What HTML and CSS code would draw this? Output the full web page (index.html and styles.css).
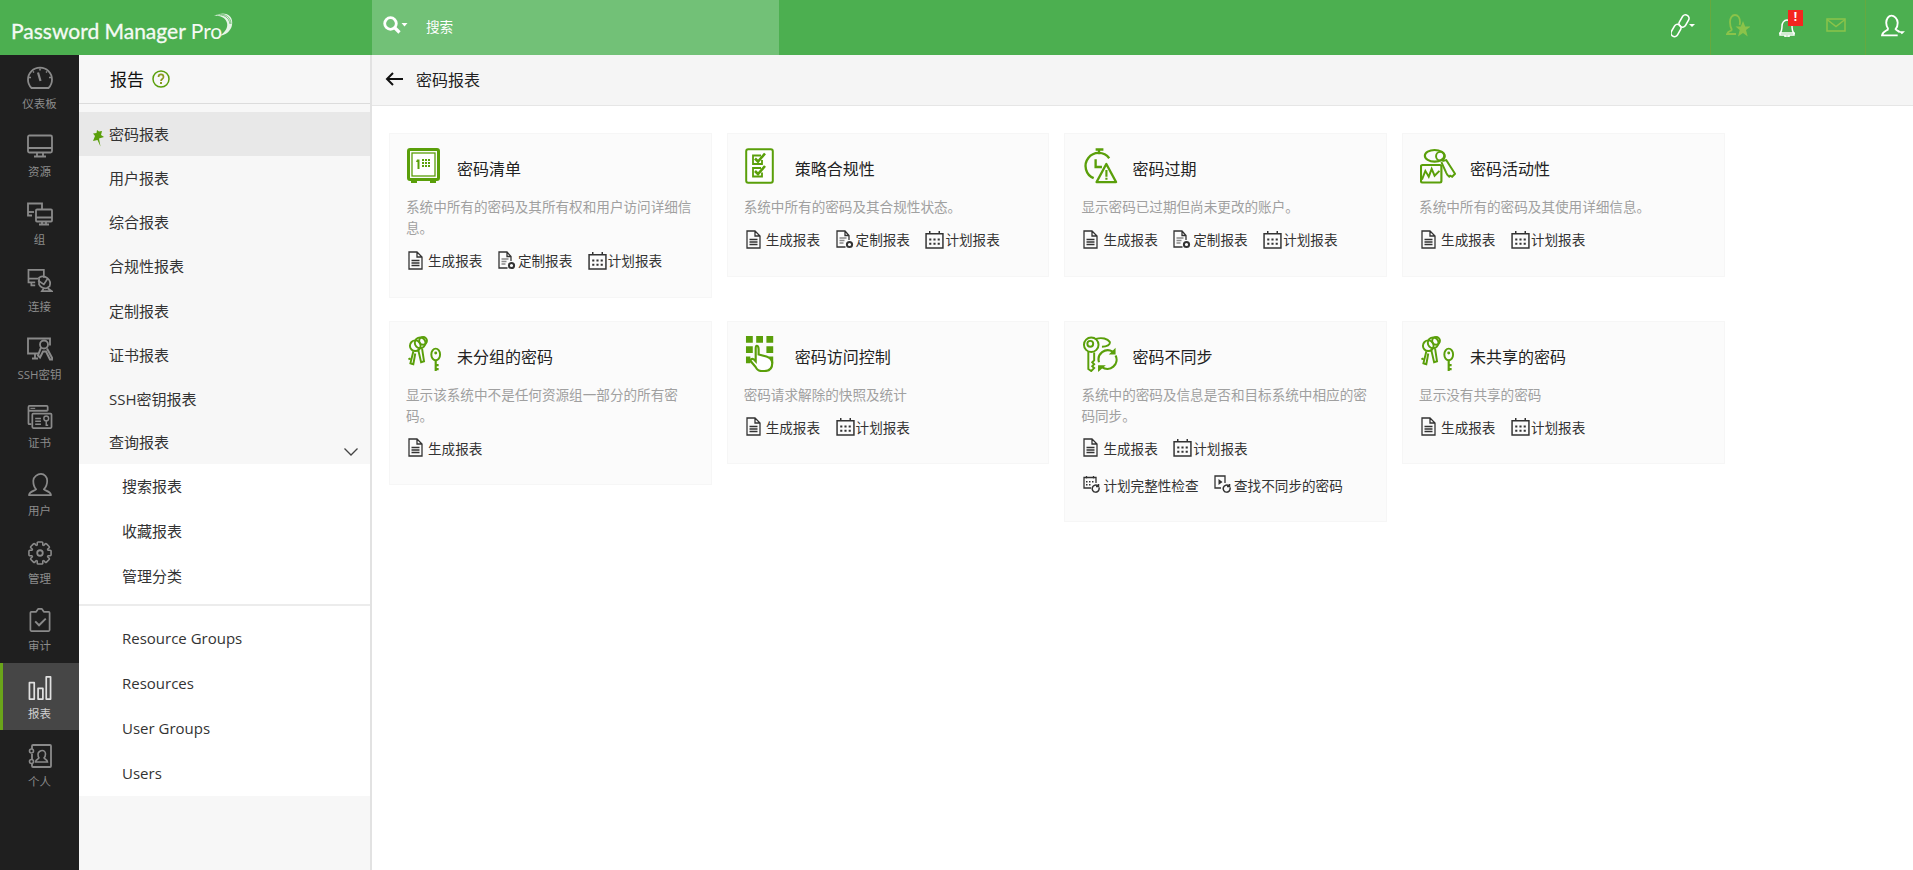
FILE: index.html
```html
<!DOCTYPE html>
<html lang="zh">
<head>
<meta charset="utf-8">
<title>密码报表</title>
<link rel="stylesheet" href="styles.css">
</head>
<body>
<svg class="defs" aria-hidden="true">
  <symbol id="doc" viewBox="0 0 15 19" preserveAspectRatio="xMinYMid"><path d="M1 1h8l5 5v12H1zM9 1v5h5M3.500 9.500h8M3.500 12h8M3.500 14.500h8" fill="none" stroke="currentColor" stroke-width="1.300"/></symbol>
  <symbol id="custom" viewBox="0 0 18 19" preserveAspectRatio="xMinYMid"><path d="M9.500 17H1V1h8l4 4.500V10M9 1v4.500h4" fill="none" stroke="currentColor" stroke-width="1.300"/><path d="M3.500 8h7M3.500 10.500h5M3.500 13h4" stroke="#888" stroke-width="1.500"/><circle cx="13.500" cy="14.500" r="2.600" fill="none" stroke="currentColor" stroke-width="2"/></symbol>
  <symbol id="cal" viewBox="0 0 18 18" preserveAspectRatio="xMinYMid"><path d="M1 3.500h16V17H1zM4.500 1v3M13.500 1v3" fill="none" stroke="currentColor" stroke-width="1.400"/><path d="M4 8h2v2H4zM8 8h2v2H8zM12 8h2v2h-2zM4 12h2v2H4zM8 12h2v2H8zM12 12h2v2h-2z" fill="currentColor"/></symbol>
  <symbol id="calsync" viewBox="0 0 18 19" preserveAspectRatio="xMinYMid"><path d="M8 13H1V2.500h12V8M3.500 1v2.500M10.500 1v2.500" fill="none" stroke="currentColor" stroke-width="1.300"/><path d="M3 6h1.500v1.500H3zM6 6h1.500v1.500H6zM9 6h1.500v1.500H9zM3 9h1.500v1.500H3zM6 9h1.500v1.500H6z" fill="currentColor"/><path d="M16 12.500a3.500 3.500 0 1 1-1-1.500M15.500 9v2.500H13" fill="none" stroke="currentColor" stroke-width="1.500"/></symbol>
  <symbol id="findsync" viewBox="0 0 18 19" preserveAspectRatio="xMinYMid"><path d="M7 13H1V1h10v7" fill="none" stroke="currentColor" stroke-width="1.300"/><path d="M4.500 4l4 3-4 3z" fill="currentColor"/><path d="M16 12.500a3.500 3.500 0 1 1-1-1.500M15.500 9v2.500H13" fill="none" stroke="currentColor" stroke-width="1.500"/></symbol>

  <symbol id="safe" viewBox="0 0 36 36" preserveAspectRatio="xMinYMin"><rect x="1.500" y="1.500" width="30" height="30" rx="1.500" fill="none" stroke="currentColor" stroke-width="3"/><rect x="5" y="5" width="23" height="23" fill="#fff" stroke="currentColor" stroke-width="1.300"/><path d="M4 32h6v3H4zM23 32h6v3h-6zM10 11.500h2.500V21h-2V14H9zM15 11h2v2h-2zM18 11h2v2h-2zM21 11h2v2h-2zM15 14h2v2h-2zM18 14h2v2h-2zM21 14h2v2h-2zM15 17h2v2h-2zM18 17h2v2h-2zM21 17h2v2h-2z" fill="currentColor"/></symbol>
  <symbol id="check" viewBox="0 0 36 36" preserveAspectRatio="xMinYMin"><rect x="1.200" y="1.200" width="26.600" height="33.600" rx="2" fill="#fff" stroke="currentColor" stroke-width="2"/><path d="M16 7.500H8V16h9v-4M16 20H8v8.500h9v-4" fill="none" stroke="currentColor" stroke-width="1.800"/><path d="M10 10.500l3 3 7-8M10 23l3 3 7-8" fill="none" stroke="currentColor" stroke-width="2.600"/></symbol>
  <symbol id="clock" viewBox="0 0 37 36"><path d="M14 1h8M17.500 1v5" stroke="currentColor" stroke-width="2.400" fill="none"/><path d="M12 30.500A13.500 13.500 0 1 1 28 10" fill="none" stroke="currentColor" stroke-width="2.400"/><path d="M14 11v8h6.500" fill="none" stroke="currentColor" stroke-width="2.400"/><path d="M25 16l10 18.500H15z" fill="none" stroke="currentColor" stroke-width="2.400" stroke-linejoin="round"/><path d="M24 22h2.200v7H24zM24 30h2.200v2.200H24z" fill="currentColor"/></symbol>
  <symbol id="keyact" viewBox="0 0 37 36"><ellipse cx="15" cy="7.500" rx="10" ry="6" fill="none" stroke="currentColor" stroke-width="2.200"/><circle cx="21" cy="8" r="4.500" fill="none" stroke="currentColor" stroke-width="2"/><path d="M23 13l4-1 9 14-3 3-2-1-1 1-2-2-1-2-5-11" fill="none" stroke="currentColor" stroke-width="2"/><rect x="1" y="17" width="21" height="18" rx="1.500" fill="#fbfbfb" stroke="currentColor" stroke-width="2.200"/><path d="M2 32l3.500-9 3.500 6 3-8 3 7 5-5" fill="none" stroke="currentColor" stroke-width="2"/></symbol>
  <symbol id="keys" viewBox="0 0 36 37"><circle cx="8" cy="10" r="5.500" fill="none" stroke="currentColor" stroke-width="2"/><circle cx="13" cy="7" r="5.500" fill="none" stroke="currentColor" stroke-width="2"/><circle cx="16" cy="5" r="4" fill="none" stroke="currentColor" stroke-width="2"/><path d="M6 16l-3 12 3 1 2-11M11 14l3 13 3-1-2-13M3 23l-2 1M3 28l2 1" fill="none" stroke="currentColor" stroke-width="2"/><ellipse cx="29" cy="19" rx="4.500" ry="6" fill="none" stroke="currentColor" stroke-width="2"/><circle cx="29" cy="17.500" r="1.500" fill="currentColor"/><path d="M29 25v11M29 30h3M29 34h3" fill="none" stroke="currentColor" stroke-width="2.200"/></symbol>
  <symbol id="grid" viewBox="0 0 36 37" preserveAspectRatio="xMinYMin"><path d="M1 0h7v7H1zM11.500 0h7v7h-7zM22 0h7v7h-7zM1 10.500h7v7H1zM22 10.500h7v7h-7zM1 21h4.500v7H1zM25 21h4v7h-4z" fill="currentColor"/><path d="M12 10c2 0 2 2 2 4v5l8 2c3 1 6 3 6 7 0 5-3 8-8 8h-3c-3 0-5-2-6-4l-5-6c-1-2 1-3 3-2l2 2V13c0-2 0-3 1-3z" fill="#fff" stroke="currentColor" stroke-width="2.200"/></symbol>
  <symbol id="keysync" viewBox="0 0 36 37"><ellipse cx="9" cy="9" rx="7.500" ry="7.500" fill="none" stroke="currentColor" stroke-width="2"/><circle cx="8" cy="8" r="3" fill="none" stroke="currentColor" stroke-width="2"/><path d="M14 3c6-2 12 0 14 3 1 3-3 5-8 5M6 16v18l3 2 3-3-2-2 2-2-2-2 2-2V17" fill="none" stroke="currentColor" stroke-width="2"/><path d="M17 27a9.500 9.500 0 0 1 14-11M34 20a9.500 9.500 0 0 1-14 12" fill="none" stroke="currentColor" stroke-width="2.200"/><path d="M27 19h7v-7zM24 30h-8v7z" fill="currentColor"/></symbol>

  <symbol id="r-dash" viewBox="0 0 26 23"><path d="M4.500 21.500a12 12 0 1 1 17 0z" fill="none" stroke="currentColor" stroke-width="1.800" stroke-linejoin="round"/><path d="M11 6l2.500 8.500" stroke="currentColor" stroke-width="2.200"/><path d="M13 2v2M4 11H2M24 11h-2M6 5l1 1M20 5l-1 1" stroke="currentColor" stroke-width="1.500"/></symbol>
  <symbol id="r-mon" viewBox="0 0 26 23"><rect x="1" y="1" width="24" height="17" rx="1.500" fill="none" stroke="currentColor" stroke-width="1.800"/><path d="M1 13.500h24M10 18v4M16 18v4M7 22h12" stroke="currentColor" stroke-width="1.800" fill="none"/></symbol>
  <symbol id="r-group" viewBox="0 0 26 23"><path d="M5 13H1V1h14v6" fill="none" stroke="currentColor" stroke-width="1.800"/><path d="M1 9.500h6" stroke="currentColor" stroke-width="1.800"/><rect x="9" y="7" width="16" height="12" rx="1" fill="none" stroke="currentColor" stroke-width="1.800"/><path d="M9 15h16M15 19v3M19 19v3M12 22h10" stroke="currentColor" stroke-width="1.800"/></symbol>
  <symbol id="r-conn" viewBox="0 0 26 25"><path d="M8 14H1V1h16v8M1 10h10M4 14v3h4" fill="none" stroke="currentColor" stroke-width="1.800"/><path d="M12 9a7.500 7.500 0 0 1 11 9l-3 2a8 8 0 0 1-8-4z" fill="none" stroke="currentColor" stroke-width="1.800"/><path d="M11 12l6 4 4-6M17 20l-2 3h10l-4-3" fill="none" stroke="currentColor" stroke-width="1.800"/></symbol>
  <symbol id="r-ssh" viewBox="0 0 26 23"><path d="M12 16H1V1h22v7M5 21h6M8 16v5" fill="none" stroke="currentColor" stroke-width="1.800"/><circle cx="17" cy="7" r="4" fill="none" stroke="currentColor" stroke-width="1.800"/><path d="M14 10l-3 8 2 2 3-6 3 0 4 8h3l-6-11" fill="none" stroke="currentColor" stroke-width="2"/></symbol>
  <symbol id="r-cert" viewBox="0 0 26 25"><path d="M4 20H1.500A1 1 0 0 1 1 19V2a1 1 0 0 1 1-1h18a1 1 0 0 1 1 1v4" fill="none" stroke="currentColor" stroke-width="1.800"/><path d="M1 6h20" stroke="currentColor" stroke-width="2"/><path d="M3 3.500h5" stroke="currentColor" stroke-width="1.200"/><rect x="5" y="9" width="20" height="15" rx="1" fill="none" stroke="currentColor" stroke-width="1.800"/><path d="M8 14h6M8 17h6M8 20h6" stroke="currentColor" stroke-width="1.500"/><circle cx="19.500" cy="14" r="2.500" fill="none" stroke="currentColor" stroke-width="1.500"/><path d="M19.500 16.500V21h2" fill="none" stroke="currentColor" stroke-width="1.500"/></symbol>
  <symbol id="r-user" viewBox="0 0 26 25"><path d="M9 17c-1 1.500-7 2-7.500 6h23c-.5-4-6.500-4.500-7.500-6 2-2 3.500-5 3.500-9 0-4-3-7-6.500-7S6 4 6 8c0 4 1 7 3 9z" fill="none" stroke="currentColor" stroke-width="1.800" stroke-linejoin="round"/></symbol>
  <symbol id="r-gear" viewBox="0 0 26 26"><g fill="none" stroke="currentColor" stroke-width="1.700"><g><rect x="10" y="1" width="6" height="6" rx="1"/><rect x="10" y="1" width="6" height="6" rx="1" transform="rotate(45 13 13)"/><rect x="10" y="1" width="6" height="6" rx="1" transform="rotate(90 13 13)"/><rect x="10" y="1" width="6" height="6" rx="1" transform="rotate(135 13 13)"/><rect x="10" y="1" width="6" height="6" rx="1" transform="rotate(180 13 13)"/><rect x="10" y="1" width="6" height="6" rx="1" transform="rotate(225 13 13)"/><rect x="10" y="1" width="6" height="6" rx="1" transform="rotate(270 13 13)"/><rect x="10" y="1" width="6" height="6" rx="1" transform="rotate(315 13 13)"/></g><circle cx="13" cy="13" r="8.500" fill="#1f1f1f" stroke="none"/><circle cx="13" cy="13" r="3" stroke-width="2"/></g></symbol>
  <symbol id="r-audit" viewBox="0 0 22 25"><path d="M7 4H2a1 1 0 0 0-1 1v18a1 1 0 0 0 1 1h18a1 1 0 0 0 1-1V5a1 1 0 0 0-1-1h-5l-2-3H9z" fill="none" stroke="currentColor" stroke-width="1.800" stroke-linejoin="round"/><path d="M6 14l4 4 7-7" fill="none" stroke="currentColor" stroke-width="2"/></symbol>
  <symbol id="r-report" viewBox="0 0 24 25"><path d="M1 7h5v17H1zM10 13h5v11h-5zM18.500 1h4.500v23h-4.500z" fill="none" stroke="currentColor" stroke-width="1.800" stroke-linejoin="round"/></symbol>
  <symbol id="r-person" viewBox="0 0 24 24"><path d="M4 5V2a1 1 0 0 1 1-1h17a1 1 0 0 1 1 1v20a1 1 0 0 1-1 1H5a1 1 0 0 1-1-1v-2M4 10v6" fill="none" stroke="currentColor" stroke-width="1.800"/><circle cx="3.500" cy="7" r="2" fill="none" stroke="currentColor" stroke-width="1.600"/><circle cx="3.500" cy="17.500" r="2" fill="none" stroke="currentColor" stroke-width="1.600"/><path d="M11 14c-.5 1-3.500 1.500-3.500 4h12c0-2.500-3-3-3.500-4 1-1 1.500-2.500 1.500-4 0-2-1.500-3.500-3.200-3.500S10 8 10 10c0 1.500 0 3 1 4z" fill="none" stroke="currentColor" stroke-width="1.600"/></symbol>
</svg>

<header class="topbar">
  <div class="logo">
    <span class="logo-text">Password Manager <span class="logo-pro">Pro</span></span>
    <svg class="logo-mark" viewBox="0 0 28 26"><path d="M7 4C15-1 27 1 25 13c-1 6-6 10-13 11 7-4 9-9 8-13C19 6 13 3 7 4z" fill="#e6f4e7"/><path d="M10 3c6-1 12 2 13 9M13 2c5 0 11 3 11 10" fill="none" stroke="#4caf50" stroke-width=".7"/></svg>
  </div>
  <div class="search">
    <svg class="search-icon" viewBox="0 0 25 18"><circle cx="7.500" cy="7.500" r="5.800" fill="none" stroke="#fff" stroke-width="2.800"/><path d="M11.500 11.500l5 5" stroke="#fff" stroke-width="3.200"/><path d="M18.500 7h6l-3 3.500z" fill="#fff"/></svg>
    <span>搜索</span>
  </div>
  <div class="top-tools">
    <div class="tool-group tool-links">
      <svg class="top-icon" viewBox="0 0 24 24"><g fill="none" stroke="#fff" stroke-width="1.600"><rect x="9.500" y="0.500" width="7" height="13" rx="3.500" transform="rotate(30 13 7)"/><rect x="1.500" y="10" width="7" height="13" rx="3.500" transform="rotate(30 5 16.500)"/></g><path d="M18 10h6l-3 3z" fill="#fff"/></svg>
    </div>
    <div class="tool-group tool-notes">
      <svg class="top-icon" viewBox="0 0 24 24"><path d="M6 16c-1 1-4 1-5 4h9M6 16c-2-3-2-5-2-8 0-4 2-7 5-7s5 3 5 7c0 1 0 2-.5 3" fill="none" stroke="#8bc34a" stroke-width="1.800"/><path d="M17 7l2.200 5.500H24.500l-4.500 3.500 1.700 6.500L17 19l-5 3.500 1.700-6.500L9.500 12.500h5.300z" fill="#8bc34a"/></svg>
      <div class="bell">
        <svg class="bell-icon" viewBox="0 0 16 18"><path d="M1 14c2-2 2-4 2-7s2-6 5-6 5 3 5 6 0 5 2 7zM1 14h14v2H1zM6 16h4v2H6z" fill="none" stroke="#fff" stroke-width="1.500"/></svg>
        <span class="badge">!</span>
      </div>
      <svg class="mail-icon" viewBox="0 0 20 14"><rect x="1" y="1" width="18" height="12" fill="none" stroke="#8bc34a" stroke-width="1.500"/><path d="M1 1.500l9 7 9-7" fill="none" stroke="#8bc34a" stroke-width="1.500"/></svg>
    </div>
    <div class="tool-group tool-user">
      <svg class="top-icon" viewBox="0 0 23 22"><path d="M7 14c-1 1.500-5.500 2-6 6h15M7 14c-1.500-2-2-4-2-6 0-4 2.500-7 5-7s6 3 6 7c0 3-.5 4.500-2 6 .5 1 3 2 4 3" fill="none" stroke="#fff" stroke-width="1.800"/><path d="M17 16h6l-3 3z" fill="#fff"/></svg>
    </div>
  </div>
</header>

<div class="layout">
  <nav class="rail">
    <a class="rail-item"><svg class="rail-icon"><use href="#r-dash"/></svg><span>仪表板</span></a>
    <a class="rail-item"><svg class="rail-icon"><use href="#r-mon"/></svg><span>资源</span></a>
    <a class="rail-item"><svg class="rail-icon"><use href="#r-group"/></svg><span>组</span></a>
    <a class="rail-item"><svg class="rail-icon"><use href="#r-conn"/></svg><span>连接</span></a>
    <a class="rail-item"><svg class="rail-icon"><use href="#r-ssh"/></svg><span>SSH密钥</span></a>
    <a class="rail-item"><svg class="rail-icon"><use href="#r-cert"/></svg><span>证书</span></a>
    <a class="rail-item"><svg class="rail-icon"><use href="#r-user"/></svg><span>用户</span></a>
    <a class="rail-item"><svg class="rail-icon"><use href="#r-gear"/></svg><span>管理</span></a>
    <a class="rail-item"><svg class="rail-icon"><use href="#r-audit"/></svg><span>审计</span></a>
    <a class="rail-item is-active"><svg class="rail-icon"><use href="#r-report"/></svg><span>报表</span></a>
    <a class="rail-item"><svg class="rail-icon"><use href="#r-person"/></svg><span>个人</span></a>
  </nav>

  <aside class="side">
    <div class="side-head">
      <span class="side-title">报告</span>
      <svg class="help" viewBox="0 0 18 18"><circle cx="9" cy="9" r="8" fill="none" stroke="#5a9f0a" stroke-width="1.500"/><path d="M6.500 7c0-3.500 5-3.500 5 0 0 2-2.500 2-2.500 4" fill="none" stroke="#8a9a20" stroke-width="1.700"/><path d="M8 12h2v2H8z" fill="#8a9a20"/></svg>
    </div>
    <ul class="menu">
      <li class="menu-row is-current"><svg class="pin" viewBox="0 0 12 17"><path d="M5 0l2 1.500L10 1l-1 4 3 2-5 1.500L8.500 16.500 5.500 10 1 11l2-5L1 3.500l3.500-.5z" fill="#5a9f0a"/></svg>密码报表</li>
      <li class="menu-row">用户报表</li>
      <li class="menu-row">综合报表</li>
      <li class="menu-row">合规性报表</li>
      <li class="menu-row">定制报表</li>
      <li class="menu-row">证书报表</li>
      <li class="menu-row">SSH密钥报表</li>
      <li class="menu-row menu-row-last">查询报表<svg class="chev" viewBox="0 0 14 8"><path d="M.5.5L7 7l6.500-6.500" fill="none" stroke="#444" stroke-width="1.300"/></svg></li>
    </ul>
    <div class="sub">
      <ul class="sub-list">
        <li class="sub-row">搜索报表</li>
        <li class="sub-row">收藏报表</li>
        <li class="sub-row">管理分类</li>
      </ul>
      <ul class="sub-links">
        <li class="sub-row">Resource Groups</li>
        <li class="sub-row">Resources</li>
        <li class="sub-row">User Groups</li>
        <li class="sub-row">Users</li>
      </ul>
    </div>
  </aside>

  <main class="main">
    <div class="main-head">
      <svg class="back" viewBox="0 0 18 14"><path d="M18 7H2M8 1L2 7l6 6" fill="none" stroke="#111" stroke-width="2"/></svg>
      <h1>密码报表</h1>
    </div>
    <div class="cards">
      <section class="card">
        <div class="card-head"><svg class="card-icon"><use href="#safe"/></svg><h2>密码清单</h2></div>
        <p>系统中所有的密码及其所有权和用户访问详细信息。</p>
        <div class="actions">
          <a class="action"><svg class="a-icon"><use href="#doc"/></svg>生成报表</a>
          <a class="action"><svg class="a-icon"><use href="#custom"/></svg>定制报表</a>
          <a class="action"><svg class="a-icon"><use href="#cal"/></svg>计划报表</a>
        </div>
      </section>
      <section class="card">
        <div class="card-head"><svg class="card-icon"><use href="#check"/></svg><h2>策略合规性</h2></div>
        <p>系统中所有的密码及其合规性状态。</p>
        <div class="actions">
          <a class="action"><svg class="a-icon"><use href="#doc"/></svg>生成报表</a>
          <a class="action"><svg class="a-icon"><use href="#custom"/></svg>定制报表</a>
          <a class="action"><svg class="a-icon"><use href="#cal"/></svg>计划报表</a>
        </div>
      </section>
      <section class="card">
        <div class="card-head"><svg class="card-icon"><use href="#clock"/></svg><h2>密码过期</h2></div>
        <p>显示密码已过期但尚未更改的账户。</p>
        <div class="actions">
          <a class="action"><svg class="a-icon"><use href="#doc"/></svg>生成报表</a>
          <a class="action"><svg class="a-icon"><use href="#custom"/></svg>定制报表</a>
          <a class="action"><svg class="a-icon"><use href="#cal"/></svg>计划报表</a>
        </div>
      </section>
      <section class="card">
        <div class="card-head"><svg class="card-icon"><use href="#keyact"/></svg><h2>密码活动性</h2></div>
        <p>系统中所有的密码及其使用详细信息。</p>
        <div class="actions">
          <a class="action"><svg class="a-icon"><use href="#doc"/></svg>生成报表</a>
          <a class="action"><svg class="a-icon"><use href="#cal"/></svg>计划报表</a>
        </div>
      </section>
      <section class="card">
        <div class="card-head"><svg class="card-icon"><use href="#keys"/></svg><h2>未分组的密码</h2></div>
        <p>显示该系统中不是任何资源组一部分的所有密码。</p>
        <div class="actions">
          <a class="action"><svg class="a-icon"><use href="#doc"/></svg>生成报表</a>
        </div>
      </section>
      <section class="card">
        <div class="card-head"><svg class="card-icon"><use href="#grid"/></svg><h2>密码访问控制</h2></div>
        <p>密码请求解除的快照及统计</p>
        <div class="actions">
          <a class="action"><svg class="a-icon"><use href="#doc"/></svg>生成报表</a>
          <a class="action"><svg class="a-icon"><use href="#cal"/></svg>计划报表</a>
        </div>
      </section>
      <section class="card">
        <div class="card-head"><svg class="card-icon"><use href="#keysync"/></svg><h2>密码不同步</h2></div>
        <p>系统中的密码及信息是否和目标系统中相应的密码同步。</p>
        <div class="actions">
          <a class="action"><svg class="a-icon"><use href="#doc"/></svg>生成报表</a>
          <a class="action"><svg class="a-icon"><use href="#cal"/></svg>计划报表</a>
        </div>
        <div class="actions">
          <a class="action"><svg class="a-icon"><use href="#calsync"/></svg>计划完整性检查</a>
          <a class="action"><svg class="a-icon"><use href="#findsync"/></svg>查找不同步的密码</a>
        </div>
      </section>
      <section class="card">
        <div class="card-head"><svg class="card-icon"><use href="#keys"/></svg><h2>未共享的密码</h2></div>
        <p>显示没有共享的密码</p>
        <div class="actions">
          <a class="action"><svg class="a-icon"><use href="#doc"/></svg>生成报表</a>
          <a class="action"><svg class="a-icon"><use href="#cal"/></svg>计划报表</a>
        </div>
      </section>
    </div>
  </main>
</div>
</body>
</html>
```
FILE: styles.css
```css
* { box-sizing: border-box; }
html, body { margin: 0; height: 100%; overflow: hidden; }
body {
  font-family: "Open Sans", "Noto Sans CJK SC", sans-serif;
  color: #333;
  background: #fff;
}
ul { list-style: none; margin: 0; padding: 0; }
h1, h2, p { margin: 0; font-weight: 400; }
.defs { width: 0; height: 0; position: absolute; }

.topbar { height: 55px; background: #4caf50; display: flex; }
.logo { width: 372px; padding-left: 11px; display: flex; align-items: flex-start; color: #fff; }
.logo-text { font-family: Lato, sans-serif; font-size: 21px; line-height: 24px; margin-top: 19px; white-space: nowrap; color: #f4faf4; -webkit-text-stroke: .3px #f4faf4; }
.logo-pro { -webkit-text-stroke: 0; }
.logo-mark { width: 28px; height: 26px; margin: 12px 0 0 -15px; }
.search { width: 407px; background: #72c177; color: #fff; display: flex; align-items: center; font-size: 13.600px; padding-left: 11px; }
.search-icon { width: 25px; height: 18px; margin-right: 18px; margin-top: -6px; }
.search span { margin-top: -4px; }
.top-tools { flex: 1; display: flex; justify-content: flex-end; }
.tool-group { display: flex; align-items: center; height: 55px; }
.tool-links { padding-right: 15px; }
.top-icon { width: 24px; height: 24px; margin-top: -3px; }
.tool-notes { width: 156px; border-left: 1px solid #66a93f; border-right: 1px solid #66a93f; padding-left: 15px; }
.bell { position: relative; margin-left: 29px; margin-top: -8px; display: flex; }
.bell-icon { width: 16px; height: 18px; margin-top: 8px; }
.badge { position: absolute; left: 9px; top: -1px; width: 15px; height: 16px; background: #f4261f; color: #fff; font-size: 12px; font-weight: 700; line-height: 14px; text-align: center; }
.mail-icon { width: 20px; height: 14px; margin-left: 31px; margin-top: -5px; }
.tool-user { width: 47px; padding-left: 15px; }

.layout { display: flex; height: 815px; }

.rail { width: 79px; background: #1f1f1f; color: #8c8c8c; flex: none; }
.rail-item { height: 67.800px; display: flex; flex-direction: column; align-items: center; padding-top: 11px; font-size: 11.500px; line-height: 18px; }
.rail-icon { width: 26px; height: 24px; margin-bottom: 5px; color: #8a8a8a; }
.rail-item.is-active { height: 67px; margin: -2px 0 2.800px; padding: 13px 3px 0 0; background: #464646; border-left: 3px solid #6aa51a; color: #d0d0d0; }
.is-active .rail-icon { color: #e0e0e0; }

.side { width: 293px; background: #f7f7f7; border-right: 2px solid #e2e2e2; flex: none; }
.side-head { height: 49px; border-bottom: 1px solid #dcdcdc; padding: 0 0 1px 31px; display: flex; align-items: center; }
.side-title { font-size: 17px; color: #111; }
.help { width: 18px; height: 18px; margin-left: 8px; }
.menu { padding-top: 8px; }
.menu-row { height: 44.250px; padding: 0 0 2px 30px; display: flex; align-items: center; font-size: 15px; position: relative; }
.menu-row-last { height: 42.250px; }
.is-current { background: #e8e8e8; }
.pin { width: 12px; height: 17px; position: absolute; left: 13px; top: 18px; }
.chev { width: 14px; height: 8px; position: absolute; left: 265px; top: 26px; }
.sub { background: #fff; font-size: 15px; }
.sub-row { height: 45px; padding: 0 0 2px 43px; display: flex; align-items: center; }
.sub-list { padding-bottom: 5px; border-bottom: 2px solid #ececec; }
.sub-links { padding-top: 10px; }

.main { flex: 1; min-width: 0; }
.main-head { height: 51px; background: #f5f5f5; border-bottom: 1px solid #e6e6e6; display: flex; align-items: center; padding: 0 0 2px 13px; }
.back { width: 18px; height: 14px; margin-right: 13px; }
.main-head h1 { font-size: 16px; color: #222; }
.cards { padding: 27px 0 0 17px; display: grid; grid-template-columns: repeat(4, 322.700px); column-gap: 15px; row-gap: 23px; align-items: start; }
.card { background: #fbfbfb; border: 1px solid #f6f6f6; padding: 14px 16px 18px; }
.card-head { height: 48px; display: flex; align-items: flex-start; padding-left: 1px; }
.card-icon { width: 36px; height: 36px; color: #5a9f0a; flex: none; margin-right: 14px; }
.card-head h2 { font-size: 16px; line-height: 24px; color: #222; margin-top: 9px; }
.card p { font-size: 13.600px; line-height: 21px; color: #a0a0a0; }
.actions { display: flex; height: 37px; align-items: center; gap: 13.500px; }
.card p + .actions { margin-top: 3.500px; }
.action { display: flex; align-items: center; font-size: 13.600px; color: #333; white-space: nowrap; }
.a-icon { width: 20px; height: 19px; margin-left: 2px; color: #333; flex: none; }
```
